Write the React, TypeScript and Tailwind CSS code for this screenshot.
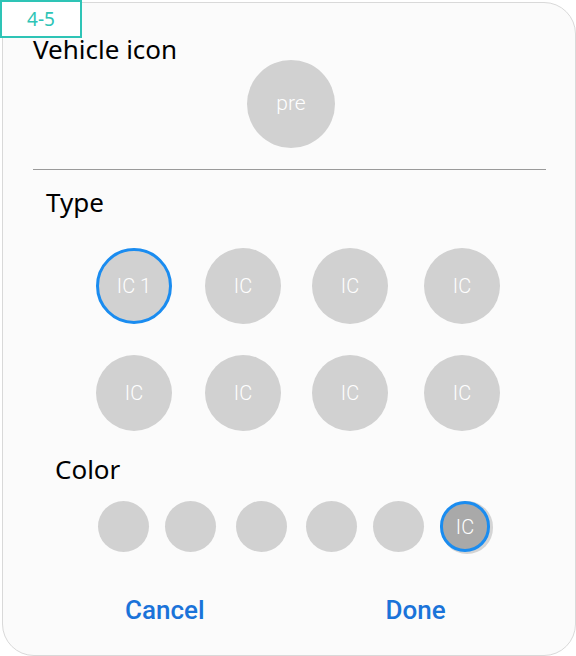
import React from 'react';

const TYPE_ROWS = [
  [
    { label: 'IC 1', selected: true },
    { label: 'IC' },
    { label: 'IC' },
    { label: 'IC' },
  ],
  [{ label: 'IC' }, { label: 'IC' }, { label: 'IC' }, { label: 'IC' }],
];

const TYPE_X = ['ml-[93px]', 'ml-[33px]', 'ml-[31px]', 'ml-[36px]'];
const COLOR_X = ['ml-[95px]', 'ml-[16px]', 'ml-[20px]', 'ml-[19px]', 'ml-[16px]', 'ml-[16px]'];

const sans = { fontFamily: '"Noto Sans", "Open Sans", sans-serif' };
const roboto = { fontFamily: 'Roboto, "Noto Sans", sans-serif' };

export default function App() {
  return (
    <div className="relative w-[576px] h-[656px] bg-white overflow-hidden">
      {/* 카드 */}
      <div
        className="ml-[2px] mt-[2px] w-[574px] h-[654px] rounded-[32px] border border-[#d9d9d9] bg-[#fbfbfb] flex flex-col"
        style={sans}
      >
        <h2 className="ml-[30px] mt-[30px] text-[26px] leading-[32px] text-black">Vehicle icon</h2>

        <div className="mt-[-5px] flex justify-center pl-[4px]">
          <div
            className="w-[88px] h-[88px] rounded-full bg-[#d1d1d1] flex items-center justify-center text-white text-[21px] font-light"
            style={roboto}
          >
            pre
          </div>
        </div>

        <div className="ml-[30px] mt-[21px] w-[513px] h-px bg-[#9a9a9a]" />

        <h3 className="ml-[43px] mt-[16px] text-[26px] leading-[32px] text-black">Type</h3>

        <div className="mt-[30px] flex flex-col gap-[31px]">
          {TYPE_ROWS.map((row, ri) => (
            <div key={ri} className="flex">
              {row.map((item, i) => (
                <div
                  key={i}
                  className={`${TYPE_X[i]} w-[76px] h-[76px] rounded-full bg-[#d1d1d1] flex items-center justify-center text-white text-[20px] font-light ${
                    item.selected ? 'border-[3px] border-[#1a8cf0]' : ''
                  }`}
                  style={roboto}
                >
                  {item.label}
                </div>
              ))}
            </div>
          ))}
        </div>

        <h3 className="ml-[52px] mt-[22px] text-[26px] leading-[32px] text-black">Color</h3>

        <div className="mt-[16px] flex">
          {COLOR_X.map((cls, i) =>
            i === COLOR_X.length - 1 ? (
              <div
                key={i}
                className={`${cls} w-[50px] h-[51px] rounded-full bg-[#a9a9a9] border-[3px] border-[#1a8cf0] shadow-[2px_1px_0_1px_#d4d4d4] flex items-center justify-center text-white text-[20px] font-light`}
                style={roboto}
              >
                IC
              </div>
            ) : (
              <div key={i} className={`${cls} w-[51px] h-[51px] rounded-full bg-[#d1d1d1]`} />
            )
          )}
        </div>

        <div className="mt-[42px] flex text-[26px] leading-[32px] font-medium text-[#1a73d9]" style={roboto}>
          <button className="ml-[122px]">Cancel</button>
          <button className="ml-[181px]">Done</button>
        </div>
      </div>

      {/* 라벨 */}
      <div
        className="absolute left-0 top-0 w-[82px] h-[38px] border-2 border-[#2ec4b6] bg-white flex items-center justify-center text-[19px] text-[#2ec4b6]"
        style={sans}
      >
        4-5
      </div>
    </div>
  );
}
